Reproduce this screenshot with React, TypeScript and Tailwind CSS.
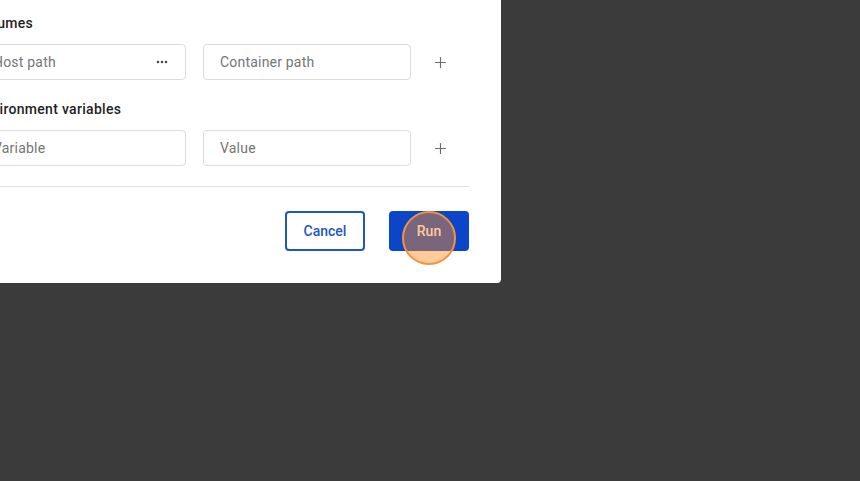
import React from 'react';
import { Plus } from 'lucide-react';

function DotsIcon() {
  return (
    <svg width="12" height="4" viewBox="0 0 12 4" className="text-[#4b4b4b]">
      <circle cx="2" cy="2" r="1.3" fill="currentColor" />
      <circle cx="6" cy="2" r="1.3" fill="currentColor" />
      <circle cx="10" cy="2" r="1.3" fill="currentColor" />
    </svg>
  );
}

interface FieldRowProps {
  left: string;
  right: string;
  browse?: boolean;
}

function FieldRow({ left, right, browse }: FieldRowProps) {
  return (
    <div className="flex items-center">
      <div className="flex h-9 w-[210px] items-center rounded border border-[#dcdcdc] pl-4 pr-[17px]">
        <span className="flex-1 text-sm tracking-[0.2px] text-[#757575]">{left}</span>
        {browse && <DotsIcon />}
      </div>
      <div className="ml-[17px] flex h-9 w-[208px] items-center rounded border border-[#dcdcdc] px-4">
        <span className="text-sm tracking-[0.2px] text-[#757575]">{right}</span>
      </div>
      <button className="ml-[14px] flex h-9 w-[30px] items-center justify-center text-[#6b6b6b]">
        <Plus size={17} strokeWidth={1.6} />
      </button>
    </div>
  );
}

export default function App() {
  return (
    <div
      className="relative h-[481px] w-full overflow-hidden bg-[#3b3b3b]"
      style={{ fontFamily: 'Roboto, "Liberation Sans", sans-serif' }}
    >
      <div className="ml-[-56px] mt-[-40px] w-[557px] rounded bg-white pb-8 pl-8 pr-8 pt-[53px]">
        <div className="mb-[11px] text-sm font-medium leading-5 tracking-[0.3px] text-[#1f1f1f]">Volumes</div>
        <FieldRow left="Host path" right="Container path" browse />

        <div className="mb-[11px] mt-[19px] text-sm font-medium leading-5 tracking-[0.3px] text-[#1f1f1f]">
          Environment variables
        </div>
        <FieldRow left="Variable" right="Value" />

        <div className="mt-5 border-t border-[#e0e0e0]" />

        <div className="mt-6 flex justify-end gap-6">
          <button className="flex h-10 w-20 items-center justify-center rounded border-2 border-[#1f55c4] text-sm font-medium text-[#1f55c4]">
            Cancel
          </button>
          <button className="flex h-10 w-20 items-center justify-center rounded bg-[#0b46c8] text-sm font-medium text-white">
            Run
          </button>
        </div>
      </div>

      <div className="pointer-events-none absolute left-[402px] top-[211px] h-[54px] w-[54px] rounded-full border-2 border-[#f7913a] bg-[rgba(255,140,30,0.45)]" />
    </div>
  );
}
